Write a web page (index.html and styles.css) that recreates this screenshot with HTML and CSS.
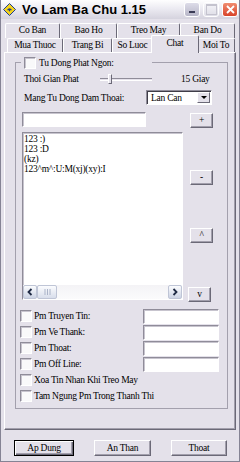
FILE: index.html
```html
<!DOCTYPE html>
<html lang="vi">
<head>
  <meta charset="UTF-8">
  <meta name="viewport" content="width=device-width, initial-scale=1.0">
  <title>Vo Lam Ba Chu 1.15</title>
  <link rel="stylesheet" href="styles.css">
</head>
<body>
  <div class="window">
    <div class="titlebar">
      <svg class="app-icon" viewBox="0 0 13 13" aria-hidden="true">
        <path d="M6.5 0.5 L12.5 6.5 L6.5 12.5 L0.5 6.5 Z" fill="#f4d31c" stroke="#1d3d8f"/>
        <path d="M3.8 7.2 Q6.5 3.2 9.2 7.2 L7.6 6.9 L6.5 8.8 L5.4 6.9 Z" fill="#1d3d8f"/>
      </svg>
      <span class="title">Vo Lam Ba Chu 1.15</span>
      <div class="caption-buttons">
        <span class="cap-btn cap-min"></span>
        <span class="cap-btn cap-max"></span>
        <span class="cap-btn cap-close">
          <svg viewBox="0 0 9 9" aria-hidden="true">
            <path d="M1 1 L8 8 M8 1 L1 8" stroke="#fff" stroke-width="1.8"/>
          </svg>
        </span>
      </div>
    </div>

    <div class="client">
      <!-- back row of tabs -->
      <div class="tab-row back">
        <div class="tab co-ban">Co Ban</div>
        <div class="tab bao-ho">Bao Ho</div>
        <div class="tab treo-may">Treo May</div>
        <div class="tab ban-do">Ban Do</div>
      </div>
      <!-- front row, holds the selected tab -->
      <div class="tab-row front">
        <div class="tab mua-thuoc">Mua Thuoc</div>
        <div class="tab trang-bi">Trang Bi</div>
        <div class="tab so-luoc">So Luoc</div>
        <div class="tab chat active">Chat</div>
        <div class="tab moi-to">Moi To</div>
      </div>

      <div class="tab-page">
        <fieldset class="group">
          <legend class="group-title">
            <span class="check"></span>
            <span class="group-label">Tu Dong Phat Ngon:</span>
          </legend>

          <div class="row slider-row">
            <span class="label label-delay">Thoi Gian Phat</span>
            <div class="slider">
              <span class="track track-left"></span>
              <span class="thumb"></span>
              <span class="track track-right"></span>
            </div>
            <span class="slider-value">15 Giay</span>
          </div>

          <div class="row combo-row">
            <span class="label label-combo">Mang Tu Dong Dam Thoai:</span>
            <div class="combo">
              <span class="combo-text">Lan Can</span>
              <span class="combo-arrow"></span>
            </div>
          </div>

          <div class="row input-row">
            <input class="field field-new" type="text">
            <button class="btn btn-small btn-add">+</button>
          </div>

          <div class="row list-row">
            <div class="list">
              <div class="list-items">
                <div>123 :)</div>
                <div>123 :D</div>
                <div>(kz)</div>
                <div>123^m^:U:M(xj)(xy):I</div>
              </div>
              <div class="hscroll">
                <span class="sb-btn">
                  <svg viewBox="0 0 8 8" aria-hidden="true"><path d="M5.5 1 L2.5 4 L5.5 7" fill="none" stroke="#1f2a44" stroke-width="1.8"/></svg>
                </span>
                <span class="sb-thumb">
                  <svg viewBox="0 0 7 6" aria-hidden="true"><path d="M1 0 V6 M3.5 0 V6 M6 0 V6" stroke="#aab3c8" stroke-width="1"/></svg>
                </span>
                <span class="sb-track"></span>
                <span class="sb-btn">
                  <svg viewBox="0 0 8 8" aria-hidden="true"><path d="M2.5 1 L5.5 4 L2.5 7" fill="none" stroke="#1f2a44" stroke-width="1.8"/></svg>
                </span>
              </div>
            </div>
            <div class="list-actions">
              <button class="btn btn-small btn-remove">-</button>
              <button class="btn btn-small btn-up">^</button>
              <button class="btn btn-small btn-down">v</button>
            </div>
          </div>

          <div class="check-list">
            <div class="check-row">
              <span class="check"></span>
              <span class="check-label">Pm Truyen Tin:</span>
              <input class="field field-pm" type="text">
            </div>
            <div class="check-row">
              <span class="check"></span>
              <span class="check-label">Pm Ve Thank:</span>
              <input class="field field-pm" type="text">
            </div>
            <div class="check-row">
              <span class="check"></span>
              <span class="check-label">Pm Thoat:</span>
              <input class="field field-pm" type="text">
            </div>
            <div class="check-row">
              <span class="check"></span>
              <span class="check-label">Pm Off Line:</span>
              <input class="field field-pm" type="text">
            </div>
            <div class="check-row">
              <span class="check"></span>
              <span class="check-label wide">Xoa Tin Nhan Khi Treo May</span>
            </div>
            <div class="check-row">
              <span class="check"></span>
              <span class="check-label wide">Tam Ngung Pm Trong Thanh Thi</span>
            </div>
          </div>
        </fieldset>
      </div>

      <div class="footer">
        <button class="btn btn-default btn-apply">Ap Dung</button>
        <button class="btn btn-hide">An Than</button>
        <button class="btn btn-exit">Thoat</button>
      </div>
    </div>
  </div>
</body>
</html>
```

FILE: styles.css
```css
:root {
  --face: #e4e1ea;
  --light: #ffffff;
  --shadow: #a29fac;
  --dark: #6b6977;
  --text: #000000;
}

* {
  box-sizing: border-box;
}

body {
  margin: 0;
  font-family: "Liberation Serif", "DejaVu Serif", serif;
  font-size: 9.5px;
  letter-spacing: -0.25px;
  color: var(--text);
  background: #ffffff;
}

.window {
  width: 240px;
  height: 462px;
  display: flex;
  flex-direction: column;
  background: var(--face);
  border: 1px solid #858394;
  border-top: none;
}

/* Title bar */
.titlebar {
  height: 19px;
  flex-shrink: 0;
  display: flex;
  align-items: center;
  padding: 0 1px 0 2px;
  background: linear-gradient(#fefefe, #ecebf2 45%, #d5d3de);
}

.app-icon {
  width: 13px;
  height: 13px;
}

.title {
  margin-left: 6px;
  font-family: "Liberation Sans", Arial, sans-serif;
  font-weight: bold;
  font-size: 13px;
  letter-spacing: 0;
}

.caption-buttons {
  margin-left: auto;
  display: flex;
  gap: 3px;
}

.cap-btn {
  width: 16px;
  height: 15px;
  border: 1px solid #ffffff;
  border-radius: 3px;
  display: flex;
  align-items: center;
  justify-content: center;
}

.cap-min {
  background: linear-gradient(#dddce8, #b7b6c8);
  align-items: flex-end;
  justify-content: flex-start;
  padding: 0 0 3px 4px;
}

.cap-min::before {
  content: "";
  width: 6px;
  height: 2px;
  background: #3a3b55;
}

.cap-max {
  background: linear-gradient(#f6f6f9, #dedde7);
}

.cap-max::before {
  content: "";
  width: 9px;
  height: 8px;
  border: 1px solid #c4c3ce;
  border-top-width: 2px;
}

.cap-close {
  background: linear-gradient(#f08c70, #d8432a);
}

.cap-close svg {
  width: 9px;
  height: 9px;
}

/* Client area */
.client {
  flex: 1;
  display: flex;
  flex-direction: column;
  padding: 4px 3px 0;
}

.tab-row {
  display: flex;
  flex-shrink: 0;
}

.tab-row.back {
  height: 15px;
  margin-left: 1px;
}

.tab-row.front {
  height: 14px;
  margin-left: 3px;
  align-items: flex-end;
}

.tab {
  height: 100%;
  border-top: 1px solid var(--light);
  border-left: 1px solid var(--light);
  border-right: 1px solid var(--dark);
  border-radius: 2px 2px 0 0;
  text-align: center;
  line-height: 13px;
  white-space: nowrap;
}

.tab.co-ban { width: 55px; }
.tab.bao-ho { width: 57px; }
.tab.treo-may { width: 63px; }
.tab.ban-do { width: 55px; }
.tab.mua-thuoc { width: 56px; }
.tab.trang-bi { width: 49px; }
.tab.so-luoc { width: 41px; }
.tab.chat { width: 48px; }
.tab.moi-to { width: 38px; }

.tab.active {
  height: 18px;
  margin: 0 -2px -1px;
  position: relative;
  background: var(--face);
  line-height: 15px;
}

.tab-page {
  height: 378px;
  flex-shrink: 0;
  border: 1px solid;
  border-color: var(--light) var(--dark) var(--dark) var(--light);
  box-shadow: inset -1px -1px var(--shadow);
  padding-top: 3px;
}

/* Group box */
.group {
  margin: 0 7px 0 10px;
  padding: 0 0 0 4px;
  height: 353px;
  min-width: 0;
  border: 1px solid #a3a0ad;
}

.group-title {
  display: flex;
  align-items: center;
  width: 131px;
  height: 13px;
  margin-left: 1px;
  padding: 0 0 0 3px;
}

.group-label {
  margin-left: 3px;
}

.check {
  width: 12px;
  height: 12px;
  flex-shrink: 0;
  background: #f9f9fa;
  border: 1px solid;
  border-color: #8f8c99 var(--light) var(--light) #8f8c99;
  box-shadow: inset 1px 1px #c7c4ce;
}

.row {
  display: flex;
  align-items: center;
}

.label {
  flex-shrink: 0;
  white-space: nowrap;
}

.slider-row {
  height: 14px;
  margin-top: 3px;
  padding-left: 4px;
}

.label-delay {
  width: 76px;
}

.slider {
  width: 52px;
  height: 12px;
  display: flex;
  align-items: center;
}

.track {
  height: 3px;
  border-top: 1px solid #8f8c99;
  border-bottom: 1px solid var(--light);
  margin-top: 1px;
}

.track-left {
  width: 8px;
}

.track-right {
  flex: 1;
}

.thumb {
  width: 4px;
  height: 10px;
  background: var(--face);
  border: 1px solid;
  border-color: var(--light) var(--dark) var(--dark) var(--light);
}

.slider-value {
  margin-left: 29px;
}

.combo-row {
  height: 15px;
  margin-top: 4px;
  padding-left: 4px;
}

.label-combo {
  width: 122px;
}

.combo {
  width: 66px;
  height: 15px;
  display: flex;
  align-items: center;
  padding-left: 4px;
  background: #ffffff;
  border: 1px solid;
  border-color: #8f8c99 var(--light) var(--light) #8f8c99;
  box-shadow: inset 1px 1px #3f3d48;
}

.combo-arrow {
  margin-left: auto;
  margin-right: 1px;
  width: 13px;
  height: 11px;
  display: flex;
  align-items: center;
  justify-content: center;
  background: var(--face);
  border: 1px solid;
  border-color: var(--light) var(--dark) var(--dark) var(--light);
}

.combo-arrow::before {
  content: "";
  border-left: 3px solid transparent;
  border-right: 3px solid transparent;
  border-top: 3px solid #000000;
}

.field {
  margin: 0;
  padding: 0 2px;
  height: 15px;
  font: inherit;
  background: #ffffff;
  border: 1px solid;
  border-color: #8f8c99 var(--light) var(--light) #8f8c99;
  box-shadow: inset 1px 1px #c7c4ce;
  outline: none;
}

.input-row {
  height: 16px;
  margin-top: 7px;
  padding-left: 2px;
}

.field-new {
  width: 124px;
  align-self: flex-start;
}

.btn {
  margin: 0;
  padding: 0;
  height: 16px;
  font: inherit;
  letter-spacing: inherit;
  color: var(--text);
  text-align: center;
  line-height: 13px;
  background: var(--face);
  border: 1px solid;
  border-color: var(--light) var(--dark) var(--dark) var(--light);
  box-shadow: inset -1px -1px var(--shadow);
}

.btn-small {
  width: 23px;
  height: 15px;
}

.btn-add {
  margin-left: 44px;
  align-self: flex-end;
}

.list-row {
  align-items: flex-start;
  height: 170px;
  margin-top: 4px;
  padding-left: 2px;
}

.list {
  width: 161px;
  height: 168px;
  display: flex;
  flex-direction: column;
  background: #ffffff;
  border: 1px solid;
  border-color: #8f8c99 var(--light) var(--light) #8f8c99;
  box-shadow: inset 1px 1px #c7c4ce;
}

.list-items {
  flex: 1;
  padding: 1px 1px;
  line-height: 10px;
}

.hscroll {
  height: 14px;
  display: flex;
  background: linear-gradient(#f4f3f6, #fbfbfc);
}

.sb-btn {
  width: 14px;
  height: 14px;
  display: flex;
  align-items: center;
  justify-content: center;
  border: 1px solid #bfc5d6;
  border-radius: 2px;
  background: linear-gradient(#fbfcfe, #ccd3e4);
}

.sb-btn svg {
  width: 8px;
  height: 8px;
}

.sb-thumb {
  width: 20px;
  height: 14px;
  display: flex;
  align-items: center;
  justify-content: center;
  border: 1px solid #bfc5d6;
  border-radius: 2px;
  background: linear-gradient(#fbfcfe, #d8deeb);
}

.sb-thumb svg {
  width: 7px;
  height: 6px;
}

.sb-track {
  flex: 1;
}

.list-actions {
  display: flex;
  flex-direction: column;
  margin-left: 7px;
}

.btn-remove {
  margin-top: 38px;
}

.btn-up {
  margin-top: 43px;
}

.btn-down {
  margin-top: 44px;
  margin-left: -2px;
}

.check-list {
  margin-top: 6px;
}

.check-row {
  height: 16px;
  display: flex;
  align-items: center;
}

.check-label {
  width: 109px;
  margin-left: 2px;
  white-space: nowrap;
}

.check-label.wide {
  width: auto;
}

.field-pm {
  width: 76px;
}

/* Bottom buttons */
.footer {
  display: flex;
  justify-content: space-between;
  margin-top: 10px;
  padding: 0 9px 0 10px;
}

.btn-apply {
  width: 60px;
}

.btn-hide {
  width: 57px;
}

.btn-exit {
  width: 56px;
}

.btn-default {
  border-color: #000000;
  box-shadow: inset 1px 1px var(--light), inset -1px -1px var(--dark), inset -2px -2px var(--shadow);
}
```
